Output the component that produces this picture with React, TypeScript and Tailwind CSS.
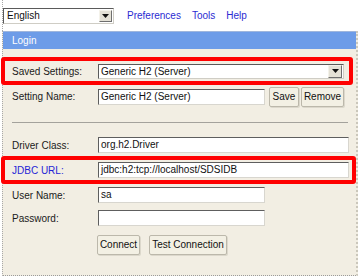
const font = "font-['Liberation_Sans',Arial,sans-serif]";

function Arrow({ small }: { small?: boolean }) {
  return (
    <div
      className={`flex items-center justify-center bg-[#e4e1d6] border border-t-[#f4f2ea] border-l-[#f4f2ea] border-r-[#6e6e6e] border-b-[#6e6e6e] ${
        small ? 'w-[13px] h-[12px]' : 'w-[14px] h-[13px]'
      }`}
    >
      <svg width="7" height="4" viewBox="0 0 7 4">
        <path d="M0 0h7L3.5 4z" fill="#111" />
      </svg>
    </div>
  );
}

function Field({ value, width }: { value: string; width: string }) {
  return (
    <div
      className={`${width} h-[16px] bg-white border border-t-[#5e5e5e] border-l-[#5e5e5e] border-r-[#d8d6cf] border-b-[#d8d6cf] flex items-center pl-[2px] text-[10px] text-[#111] leading-none`}
    >
      {value}
    </div>
  );
}

function Btn({ label, width }: { label: string; width: string }) {
  return (
    <div
      className={`${width} h-[20px] flex items-center justify-center rounded-[2px] bg-[#f3f0e4] border border-[#bcb8ab] shadow-[1px_1px_0_#dcd8cc] text-[10px] text-[#111]`}
    >
      {label}
    </div>
  );
}

export default function App() {
  return (
    <div className={`w-[364px] h-[277px] bg-white overflow-hidden text-[10px] ${font}`}>
      <div className="flex items-center h-[31px] ml-[2px] border-l border-dotted border-[#a8a8a8]">
        <div className="w-[111px] h-[16px] flex items-center justify-between bg-white border border-t-[#5a5a5a] border-l-[#5a5a5a] border-r-[#cfcdc5] border-b-[#cfcdc5] pl-[3px] pr-[1px]">
          <span className="text-[10px] text-[#111]">English</span>
          <Arrow small />
        </div>
        <div className="flex gap-[11px] ml-[13px] text-[#2b2bd2]">
          <span>Preferences</span>
          <span>Tools</span>
          <span>Help</span>
        </div>
      </div>

      <div className="ml-[2px] w-[356px] h-[245px] flex flex-col bg-[#f2eee3] border-l border-dotted border-l-[#a8a8a8] border-r-2 border-r-[#cbc7bb] border-b border-b-[#9c9c9c]">
        <div className="h-[18px] flex items-center pl-[9px] bg-[#6d9ce8] border-t border-[#9fb6dc] text-white">
          Login
        </div>

        <div className="mt-[8px] -ml-[2px] w-[352px] h-[28px] flex items-center pl-[7px] border-4 border-[#ff0000] rounded-[3px]">
          <span className="w-[86px] text-[#1a1a1a]">Saved Settings:</span>
          <div className="w-[246px] h-[15px] flex items-center justify-between bg-white border border-t-[#5a5a5a] border-l-[#5a5a5a] border-r-[#cfcdc5] border-b-[#cfcdc5] pl-[2px] pr-[1px]">
            <span className="text-[#111]">Generic H2 (Server)</span>
            <Arrow />
          </div>
        </div>

        <div className="h-[23px] flex items-center pl-[9px]">
          <span className="w-[86px] text-[#1a1a1a]">Setting Name:</span>
          <Field value="Generic H2 (Server)" width="w-[167px]" />
          <div className="flex gap-[2px] ml-[4px]">
            <Btn label="Save" width="w-[30px]" />
            <Btn label="Remove" width="w-[43px]" />
          </div>
        </div>

        <div className="mt-[14px] ml-[9px] w-[336px] h-px bg-[#a4a29c]" />

        <div className="mt-[11px] h-[22px] flex items-center pl-[9px]">
          <span className="w-[86px] text-[#1a1a1a]">Driver Class:</span>
          <Field value="org.h2.Driver" width="w-[251px]" />
        </div>

        <div className="-ml-[2px] w-[355px] h-[28px] flex items-center pl-[7px] border-4 border-[#ff0000] rounded-[3px]">
          <span className="w-[86px] text-[#2525d6]">JDBC URL:</span>
          <Field value="jdbc:h2:tcp://localhost/SDSIDB" width="w-[251px]" />
        </div>

        <div className="h-[22px] flex items-center pl-[9px]">
          <span className="w-[86px] text-[#1a1a1a]">User Name:</span>
          <Field value="sa" width="w-[167px]" />
        </div>

        <div className="mt-[1px] h-[22px] flex items-center pl-[9px]">
          <span className="w-[86px] text-[#1a1a1a]">Password:</span>
          <Field value="" width="w-[167px]" />
        </div>

        <div className="mt-[5px] h-[21px] flex items-center gap-[9px] pl-[94px]">
          <Btn label="Connect" width="w-[43px]" />
          <Btn label="Test Connection" width="w-[78px]" />
        </div>
      </div>
    </div>
  );
}
